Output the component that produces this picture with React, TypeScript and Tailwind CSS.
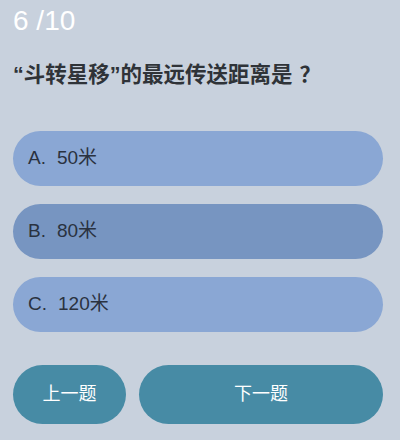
import React, { useState } from 'react';

const options = [
  { key: 'A', text: '50米' },
  { key: 'B', text: '80米' },
  { key: 'C', text: '120米' },
];

const App: React.FC = () => {
  const [selected, setSelected] = useState('B');

  return (
    <div
      className="w-[400px] h-[440px] bg-[#c8d1dd] pl-[13px] pr-[17px] overflow-hidden"
      style={{ fontFamily: '"Liberation Sans", "Noto Sans CJK SC", sans-serif' }}
    >
      <div className="pt-[7px] text-[28px] leading-none text-white">6 /10</div>

      <h1 className="mt-[30px] text-[21.5px] leading-none font-bold text-[#2f3338]">
        “斗转星移”的最远传送距离是<span className="ml-[7px]">？</span>
      </h1>

      <div className="mt-[44px] flex flex-col gap-[18px]">
        {options.map((o) => (
          <button
            key={o.key}
            onClick={() => setSelected(o.key)}
            className={`h-[55px] w-full rounded-full flex items-center pl-[15px] text-[19px] text-[#2a3240] ${
              selected === o.key ? 'bg-[#7795c1]' : 'bg-[#8aa7d4]'
            }`}
          >
            <span>{o.key}.</span>
            <span className="ml-[11px]">{o.text}</span>
          </button>
        ))}
      </div>

      <div className="mt-[33px] flex gap-[13px]">
        <button className="h-[59px] w-[113px] rounded-full bg-[#478ba5] text-white text-[18px]">
          上一题
        </button>
        <button className="h-[59px] flex-1 rounded-full bg-[#478ba5] text-white text-[18px]">
          下一题
        </button>
      </div>
    </div>
  );
};

export default App;
